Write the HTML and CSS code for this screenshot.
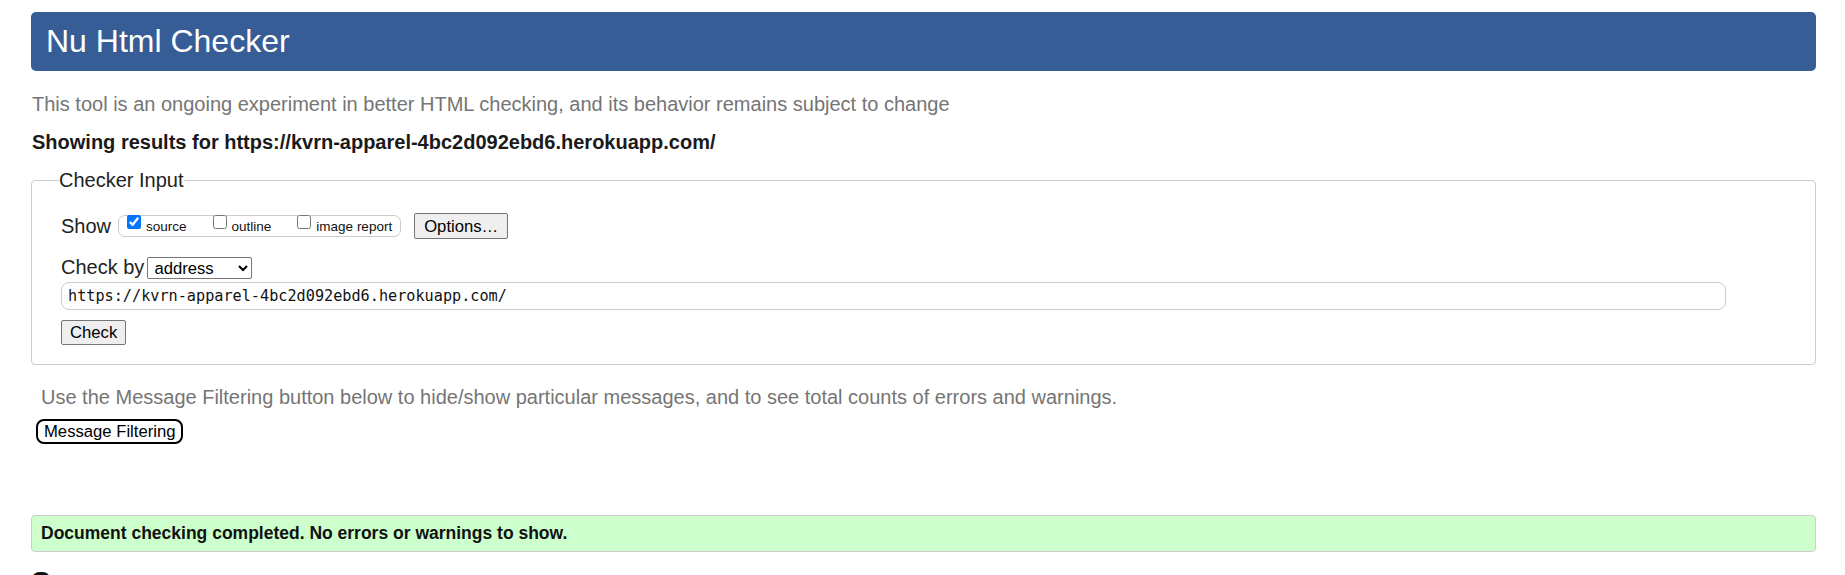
FILE: index.html
```html
<!DOCTYPE html>
<html lang="en">
<head>
<meta charset="utf-8">
<title>Nu Html Checker</title>
<link rel="stylesheet" href="styles.css">
</head>
<body>
<div class="page">
  <h1 class="title">Nu Html Checker</h1>
  <p class="intro">This tool is an ongoing experiment in better HTML checking, and its behavior remains subject to change</p>
  <p class="results">Showing results for https://kvrn-apparel-4bc2d092ebd6.herokuapp.com/</p>
  <form class="checker">
    <fieldset class="input-box">
      <legend class="legend">Checker Input</legend>
      <div class="show-row">
        <span class="label">Show</span>
        <span class="show-group">
          <label class="opt"><input type="checkbox" class="cb" checked><span class="opt-text">source</span></label>
          <label class="opt"><input type="checkbox" class="cb"><span class="opt-text">outline</span></label>
          <label class="opt"><input type="checkbox" class="cb"><span class="opt-text">image report</span></label>
        </span>
        <button type="button" class="btn options">Options…</button>
      </div>
      <div class="by-row">
        <span class="label">Check by</span>
        <select class="select">
          <option>address</option>
          <option>file upload</option>
          <option>text input</option>
        </select>
      </div>
      <input class="url" type="text" value="https://kvrn-apparel-4bc2d092ebd6.herokuapp.com/">
      <div class="check-row"><button type="button" class="btn check">Check</button></div>
    </fieldset>
  </form>
  <p class="hint">Use the Message Filtering button below to hide/show particular messages, and to see total counts of errors and warnings.</p>
  <button type="button" class="filter-btn">Message Filtering</button>
  <p class="success">Document checking completed. No errors or warnings to show.</p>
  <h2 class="source-title">Source</h2>
</div>
</body>
</html>
```
FILE: styles.css
```css
html, body {
  margin: 0;
  padding: 0;
  background: #ffffff;
}

body {
  font-family: "Liberation Sans", Arial, sans-serif;
  font-size: 20px;
  line-height: 23px;
  color: #222222;
}

.page {
  padding: 0 29px 0 31px;
}

.title {
  margin: 12px 0 0;
  height: 59px;
  padding: 0 15px;
  background: #365d95;
  color: #ffffff;
  border-radius: 5px;
  font-size: 32px;
  font-weight: normal;
  line-height: 59px;
}

.intro {
  margin: 22px 0 0 1px;
  color: #757575;
}

.results {
  margin: 15px 0 0 1px;
  font-weight: bold;
  color: #1a1a1a;
}

.checker {
  margin: 15px 0 0;
}

.input-box {
  margin: 0;
  padding: 21px 28px 19px 29px;
  border: 1px solid #cccccc;
  border-radius: 4px;
  min-width: 0;
}

.legend {
  padding: 0;
  margin-left: -2px;
  color: #222222;
  font-size: 20px;
  line-height: 23px;
}

.show-row {
  display: flex;
  align-items: center;
  height: 26px;
}

.label {
  color: #222222;
}

.show-group {
  display: inline-flex;
  align-items: flex-start;
  box-sizing: border-box;
  height: 22px;
  margin-left: 7px;
  padding: 0 8px;
  border: 1px solid #cccccc;
  border-radius: 7px;
}

.opt {
  display: inline-flex;
  align-items: flex-start;
  margin-left: 26px;
  font-size: 13.5px;
  line-height: 16px;
  color: #111111;
}

.opt:first-child {
  margin-left: 0;
}

.cb {
  width: 14px;
  height: 14px;
  margin: -1px 5px 0 0;
}

.opt-text {
  padding-top: 3px;
}

.btn {
  box-sizing: border-box;
  font-family: "Liberation Sans", Arial, sans-serif;
  font-size: 16.67px;
  line-height: 19px;
  color: #000000;
  background: #efefef;
  border: 1px solid #767676;
  border-radius: 2px;
  padding: 0 8px;
}

.options {
  height: 26px;
  margin-left: 13px;
  padding: 0 9px;
}

.by-row {
  display: flex;
  align-items: center;
  height: 23px;
  margin-top: 17px;
}

.select {
  box-sizing: border-box;
  width: 105px;
  height: 22px;
  margin-left: 3px;
  padding: 0 0 0 2px;
  font-family: "Liberation Sans", Arial, sans-serif;
  font-size: 16.67px;
  color: #000000;
  background: #ffffff;
  border: 1px solid #767676;
  border-radius: 2px;
}

.url {
  display: block;
  box-sizing: border-box;
  width: calc(100% - 61px);
  height: 28px;
  margin: 3px 0 0;
  padding: 0 6px;
  border: 1px solid #cccccc;
  border-radius: 8px;
  font-family: "DejaVu Sans Mono", "Liberation Mono", monospace;
  font-size: 15.2px;
  color: #111111;
  background: #ffffff;
}

.check-row {
  display: flex;
  margin-top: 10px;
}

.check {
  height: 25px;
}

.hint {
  margin: 21px 0 0 10px;
  color: #757575;
}

.filter-btn {
  display: block;
  box-sizing: border-box;
  height: 25px;
  margin: 10px 0 0 5px;
  padding: 0 6px;
  font-family: "Liberation Sans", Arial, sans-serif;
  font-size: 16.67px;
  line-height: 19px;
  color: #000000;
  background: #ffffff;
  border: 2px solid #000000;
  border-radius: 8px;
}

.success {
  margin: 71px 0 0;
  padding: 7px 8px 8px 9px;
  background: #ccffcc;
  border: 1px solid #cccccc;
  border-radius: 4px;
  font-size: 17.5px;
  line-height: 20px;
  font-weight: bold;
  color: #111111;
}

.source-title {
  margin: 13px 0 0;
  font-size: 30px;
  line-height: 34px;
  font-weight: bold;
  color: #111111;
}
```
